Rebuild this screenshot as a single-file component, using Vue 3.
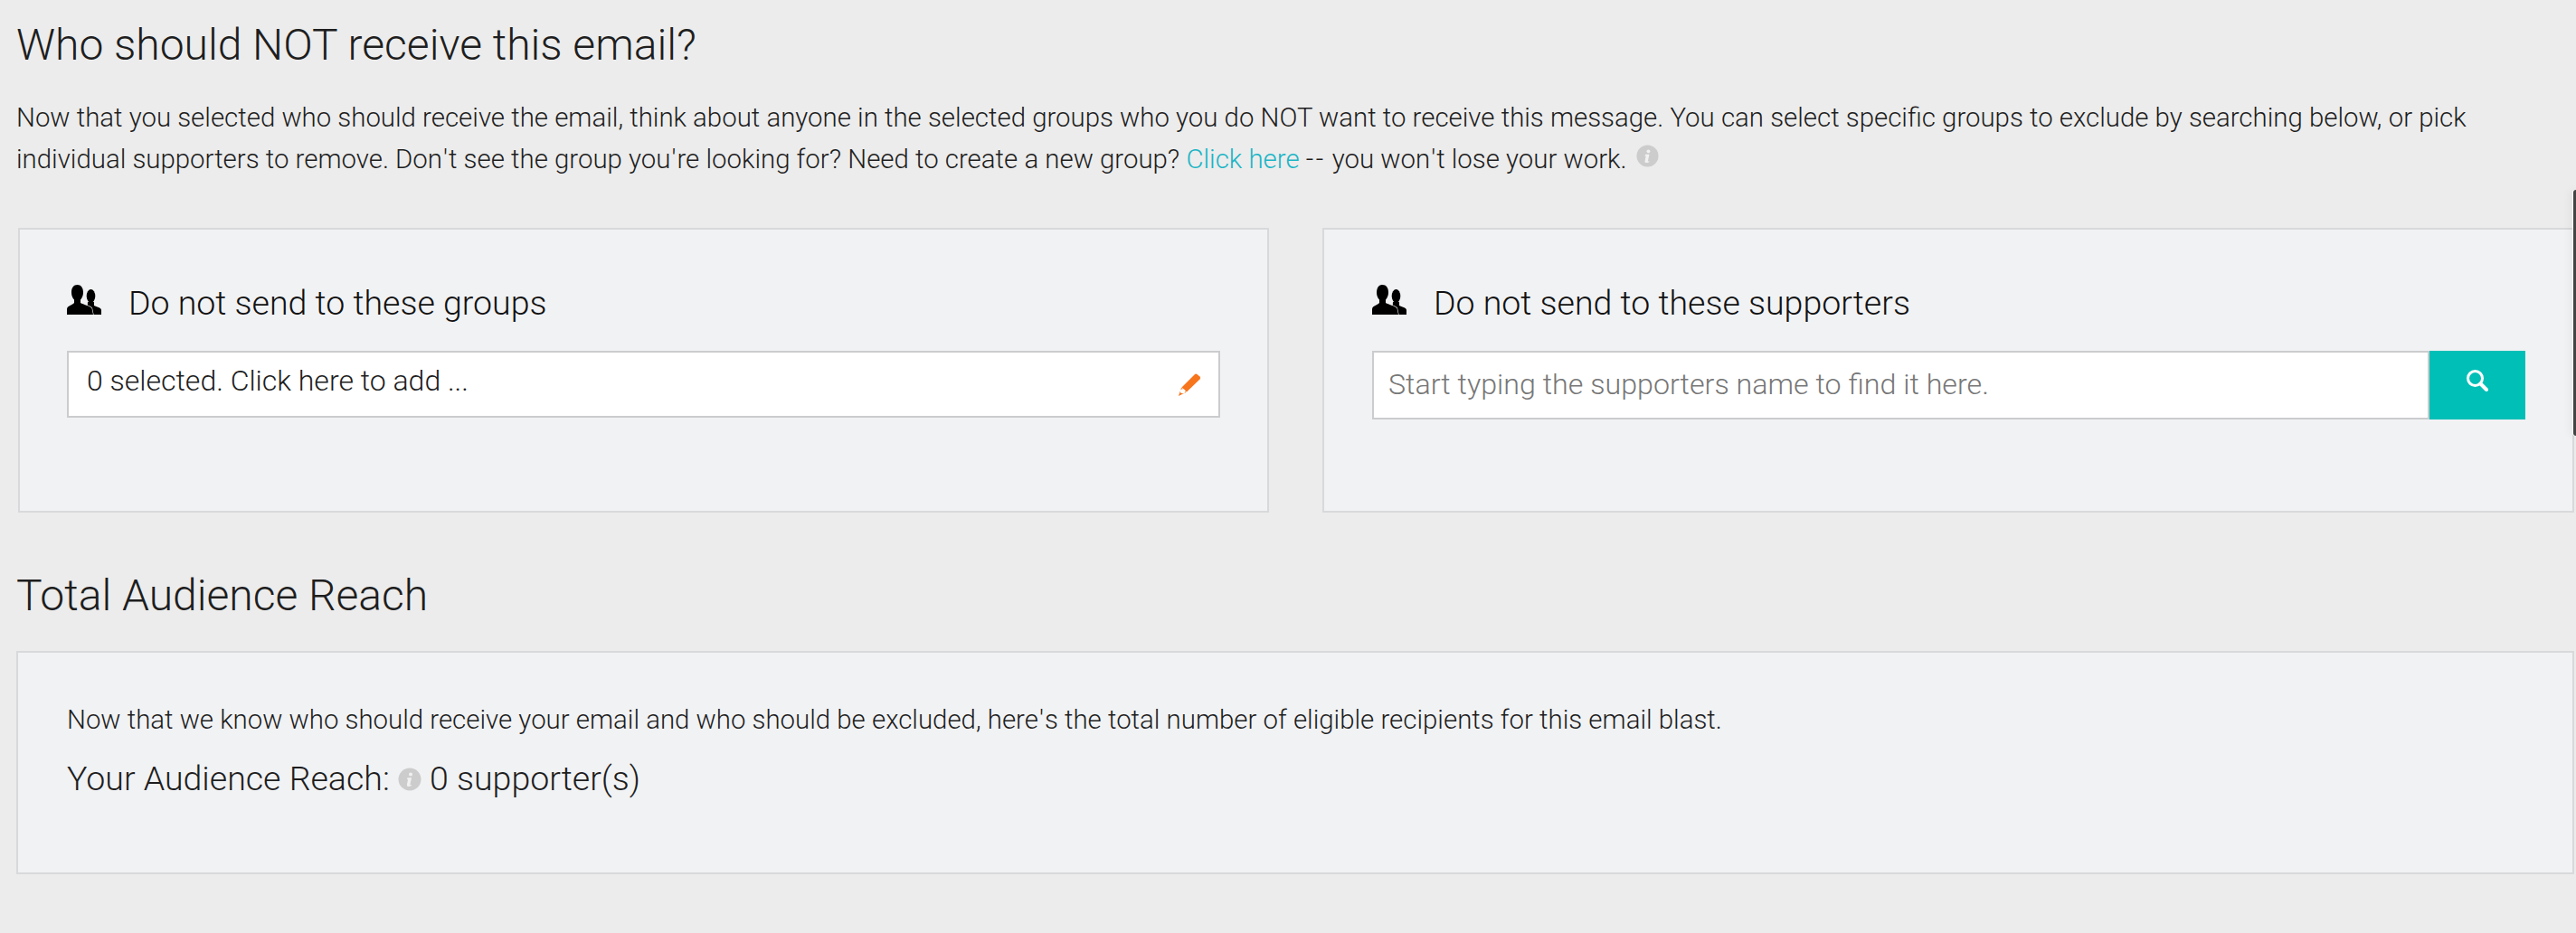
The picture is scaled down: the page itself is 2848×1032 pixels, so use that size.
<script setup>
const panels = [
  { title: 'Do not send to these groups' },
  { title: 'Do not send to these supporters' }
]
</script>

<template>
  <main class="page">
    <h1 class="heading first">Who should NOT receive this email?</h1>
    <p class="intro">
      Now that you selected who should receive the email, think about anyone in the selected groups who you do NOT want to receive this message. You can select specific groups to exclude by searching below, or pick individual supporters to remove. Don<span class="apos">'</span>t see the group you<span class="apos">'</span>re looking for? Need to create a new group? <a class="link">Click here</a> <span class="dash">--</span> you won<span class="apos">'</span>t lose your work.
      <svg class="info" viewBox="0 0 26 26"><circle cx="13" cy="13" r="12.5" fill="#cccccc" /><circle cx="14" cy="7.600" r="2" fill="#f1f1f1" /><path d="M10.500 11.200h4.600l-1.700 7.400q-.1.800.9.500l.7-.2-.2 1.100q-1.900.9-3.400.9-1.900 0-1.500-1.900l1.200-5.800-1.200-.3z" fill="#f1f1f1" /></svg>
    </p>

    <section class="row">
      <div class="panel">
        <h2 class="panel-title">
          <svg class="people" viewBox="0 0 38 33"><ellipse cx="26.500" cy="12.500" rx="4.800" ry="7.500" /><path d="M23 19h7v4c2.500 1.500 8 2 8 5v5H22z" /><path class="front" d="M5 8.500C5 3 7.500 0 11.500 0S18 3 18 8.500c0 3.500-1.300 6-3 8v3.500c3 2 10 3 12.500 6l1.500 7H0v-6c0-4 6.500-4.500 8-7v-3.500c-1.800-2-3-4.500-3-8z" /></svg>
          {{ panels[0].title }}
        </h2>
        <div class="picker">
          <span class="picker-text">0 selected. Click here to add ...</span>
          <svg class="pencil" viewBox="0 0 25 25"><path d="M17.500 1.500q1.500-1.500 3-.5l3 2.500q1.500 1.500 0 3L9 20.500 3.500 15.500z" fill="#f7751c" /><path d="M3.200 15.800 8.600 20.800 0 25z" fill="#f7751c" /><ellipse cx="4.600" cy="19.800" rx="2.800" ry="2.500" fill="#fff" /></svg>
        </div>
      </div>

      <div class="panel panel-right">
        <h2 class="panel-title">
          <svg class="people" viewBox="0 0 38 33"><ellipse cx="26.500" cy="12.500" rx="4.800" ry="7.500" /><path d="M23 19h7v4c2.500 1.500 8 2 8 5v5H22z" /><path class="front" d="M5 8.500C5 3 7.500 0 11.500 0S18 3 18 8.500c0 3.500-1.300 6-3 8v3.500c3 2 10 3 12.500 6l1.500 7H0v-6c0-4 6.500-4.500 8-7v-3.500c-1.800-2-3-4.500-3-8z" /></svg>
          {{ panels[1].title }}
        </h2>
        <div class="search">
          <input class="search-input" type="text" placeholder="Start typing the supporters name to find it here." />
          <button class="search-btn" type="button" aria-label="Search">
            <svg class="magnifier" viewBox="0 0 24 24"><circle cx="9.500" cy="9.500" r="8" fill="none" stroke="#fff" stroke-width="3" /><path d="M15.500 15.500 22 22" stroke="#fff" stroke-width="4" stroke-linecap="round" /></svg>
          </button>
        </div>
      </div>
    </section>

    <h1 class="heading second">Total Audience Reach</h1>
    <section class="reach">
      <p class="reach-text">Now that we know who should receive your email and who should be excluded, here<span class="apos">'</span>s the total number of eligible recipients for this email blast.</p>
      <p class="reach-count">
        Your Audience Reach:
        <svg class="info big" viewBox="0 0 26 26"><circle cx="13" cy="13" r="12.500" fill="#cccccc" /><circle cx="14" cy="7.600" r="2" fill="#f1f1f1" /><path d="M10.500 11.200h4.600l-1.700 7.400q-.1.800.9.500l.7-.2-.2 1.100q-1.900.9-3.400.9-1.900 0-1.500-1.900l1.200-5.800-1.200-.3z" fill="#f1f1f1" /></svg>
        0 supporter(s)
      </p>
    </section>

    <div class="scroll-thumb"></div>
  </main>
</template>

<style>
html, body { margin: 0; background: #ececec; }
</style>

<style scoped>
.page {
  position: relative;
  width: 2848px;
  height: 1032px;
  overflow: hidden;
  background: #ececec;
  color: #1e1e1e;
  font-family: Roboto, "Liberation Sans", sans-serif;
  font-weight: 300;
}
.heading {
  margin: 0;
  padding-left: 18px;
  font-size: 48px;
  line-height: 54px;
  font-weight: 300;
}
.first { padding-top: 23px; }
.second { margin-top: 65px; }
.intro {
  margin: 30px 0 0;
  padding: 0 18px;
  font-size: 29.400px;
  line-height: 46px;
}
.link { color: #1bb5c6; }
.apos { margin: 0 1px; }
.dash { letter-spacing: 2.500px; }
.info { width: 25px; height: 25px; margin-left: 3px; vertical-align: 1px; }
.info.big { width: 26px; height: 26px; margin: 0; vertical-align: -1px; }
.row {
  display: flex;
  gap: 59px;
  margin-top: 53px;
  padding: 0 2px 0 20px;
}
.panel {
  flex: 1 1 0;
  box-sizing: border-box;
  height: 315px;
  padding: 59px 52px 0;
  background: #f1f2f4;
  border: 2px solid #d8d9db;
}
.panel-right { padding-left: 53px; }
.panel-title {
  display: flex;
  align-items: center;
  margin: 0 0 31px;
  font-size: 37.500px;
  line-height: 44px;
  font-weight: 300;
  color: #111;
}
.people { width: 38px; height: 33px; margin: -7px 30px 0 0; fill: #000; flex: none; }
.front { stroke: #f1f2f4; stroke-width: 1.200; paint-order: stroke; }
.picker {
  display: flex;
  align-items: center;
  justify-content: space-between;
  box-sizing: border-box;
  height: 74px;
  padding: 0 19px 0 20px;
  background: #fff;
  border: 2px solid #cbccce;
  font-size: 32px;
}
.picker-text { margin-top: -9px; }
.pencil { width: 25px; height: 25px; flex: none; }
.search { display: flex; height: 76px; }
.search-input {
  flex: 1;
  min-width: 0;
  box-sizing: border-box;
  height: 76px;
  padding: 0 16px 2px;
  background: #fff;
  border: 2px solid #cbccce;
  border-radius: 0;
  outline: none;
  font: 300 32.200px Roboto, "Liberation Sans", sans-serif;
  color: #222;
}
.search-input::placeholder { color: #777; opacity: 1; }
.search-btn {
  display: flex;
  justify-content: center;
  padding: 21px 0 0;
  width: 106px;
  flex: none;
  background: #00bfb6;
  border: 0;
  border-radius: 0;
}
.magnifier { width: 24px; height: 24px; }
.reach {
  box-sizing: border-box;
  height: 247px;
  margin: 34px 2px 0 18px;
  padding: 56px 54px 0;
  background: #f1f2f4;
  border: 2px solid #d8d9db;
}
.reach-text { margin: 0; font-size: 29.400px; line-height: 36px; }
.reach-count { margin: 25px 0 0; font-size: 37.500px; line-height: 44px; }
.scroll-thumb {
  position: absolute;
  top: 210px;
  right: 0;
  width: 3px;
  height: 272px;
  background: #444;
  border-radius: 3px 0 0 3px;
  box-shadow: -2px 0 10px rgba(0, 0, 0, 0.12), -1px 0 0 #fff;
}
</style>
